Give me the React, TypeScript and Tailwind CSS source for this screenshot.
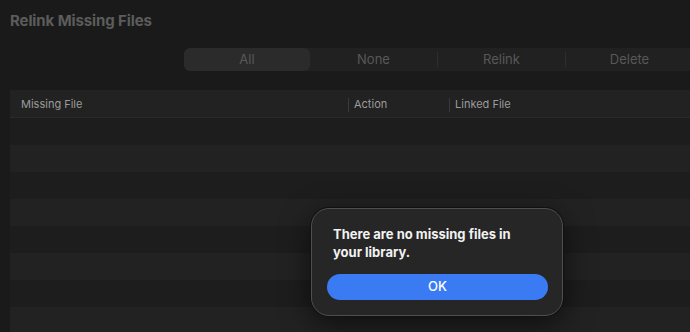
import React from "react"

const rows = Array.from({ length: 8 })

export default function App() {
  return (
    <div
      className="relative w-[690px] h-[332px] overflow-hidden bg-[#1a1a1a] select-none"
      style={{ fontFamily: "Inter, 'Liberation Sans', sans-serif" }}
    >
      {/* Title */}
      <div className="pl-[10px] pt-[10px] h-[48px] text-[15px] font-bold text-[#5c5c5c] tracking-[-0.1px]">
        Relink Missing Files
      </div>

      {/* Segmented control */}
      <div className="ml-[184px] w-[520px] h-[23px] flex bg-[#212121] rounded-l-[6px] text-[13px] text-[#585858]">
        <div className="w-[126px] flex items-center justify-center rounded-[6px] bg-[#2b2b2b]">All</div>
        <div className="w-[127px] flex items-center justify-center">None</div>
        <div className="w-px my-[4px] bg-[#2e2e2e]" />
        <div className="w-[127px] flex items-center justify-center">Relink</div>
        <div className="w-px my-[4px] bg-[#2e2e2e]" />
        <div className="w-[127px] flex items-center justify-center">Delete</div>
      </div>

      {/* Table */}
      <div className="ml-[10px] mt-[19px]">
        <div className="h-[28px] pt-[2px] flex items-center bg-[#222222] border-b border-[#2a2a2a] text-[11px] text-[#9b9b9b]">
          <div className="w-[338px] pl-[11px]">Missing File</div>
          <div className="w-px h-[14px] bg-[#3a3a3a]" />
          <div className="w-[100px] pl-[5px]">Action</div>
          <div className="w-px h-[14px] bg-[#3a3a3a]" />
          <div className="flex-1 pl-[5px]">Linked File</div>
        </div>
        {rows.map((_, i) => (
          <div key={i} className={i % 2 === 0 ? "h-[27px] bg-[#1d1d1d]" : "h-[27px] bg-[#222222]"} />
        ))}
      </div>

      {/* Alert */}
      <div className="absolute left-[311px] top-[208px] w-[252px] h-[108px] rounded-[18px] bg-[#262626] border border-[#4f4f4f] shadow-[0_0_0_1px_#111,0_8px_30px_rgba(0,0,0,0.6)] px-[15px] pt-[16px]">
        <div className="pl-[6px] text-[13px] leading-[18px] font-bold text-[#f2f2f2]">
          There are no missing files in
          <br />
          your library.
        </div>
        <button className="mt-[13px] w-[221px] h-[26px] rounded-full bg-[#3a7bf4] text-white text-[13px] font-medium flex items-center justify-center">
          OK
        </button>
      </div>
    </div>
  )
}
